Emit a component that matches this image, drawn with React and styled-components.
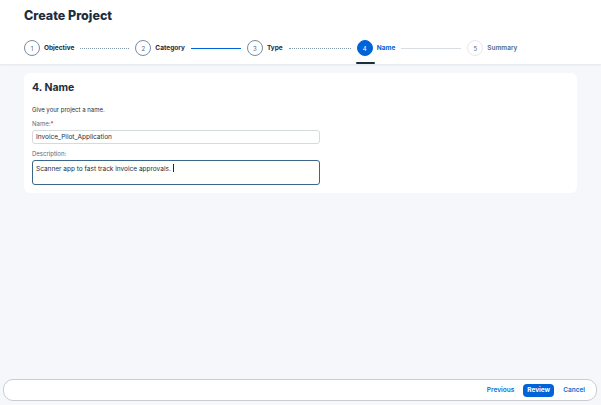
import React from "react";
import styled, { createGlobalStyle } from "styled-components";

const GlobalStyle = createGlobalStyle`
  html, body {
    margin: 0;
    padding: 0;
    background: #f5f7fa;
    font-family: "Inter", "Liberation Sans", sans-serif;
    color: #1d2d3e;
  }
`;

const Page = styled.div`
  width: 601px;
  height: 405px;
  display: flex;
  flex-direction: column;
  background: #f5f7fa;
  overflow: hidden;
`;

const Header = styled.div`
  background: #fff;
  height: 64px;
  box-sizing: border-box;
  padding: 8px 24px 0;
  box-shadow: 0 1px 2px rgba(0, 0, 0, 0.08);
  display: flex;
  flex-direction: column;
`;

const Title = styled.h1`
  margin: 0;
  font-size: 12.5px;
  font-weight: 800;
  color: #1d2d3e;
  line-height: 16px;
`;

const Steps = styled.div`
  display: flex;
  align-items: center;
  margin-top: 12px;
  height: 24px;
`;

const Step = styled.div`
  position: relative;
  display: flex;
  align-items: center;
  gap: 4px;
  height: 24px;
  &::after {
    content: "";
    display: ${(p) => (p.$active ? "block" : "none")};
    position: absolute;
    left: -1px;
    bottom: -4px;
    width: 19px;
    height: 2px;
    border-radius: 1px;
    background: #1d2d3e;
  }
`;

const Circle = styled.span`
  width: 16px;
  height: 16px;
  box-sizing: border-box;
  border-radius: 50%;
  display: flex;
  align-items: center;
  justify-content: center;
  font-size: 6px;
  border: 1px solid ${(p) => (p.$active ? "#0064d9" : p.$done ? "#758ca4" : "#e5e9ee")};
  background: ${(p) => (p.$active ? "#0064d9" : "#fff")};
  color: ${(p) => (p.$active ? "#fff" : "#556b82")};
`;

const StepLabel = styled.span`
  font-size: 6.5px;
  font-weight: ${(p) => (p.$muted ? 600 : 700)};
  color: ${(p) => (p.$active ? "#0064d9" : p.$muted ? "#556b82" : "#1d2d3e")};
`;

const Connector = styled.span`
  height: 0;
  width: ${(p) => p.$w}px;
  margin: 0 6px;
  border-top: 1px ${(p) => p.$kind || "solid"} ${(p) => p.$color || "#0064d9"};
`;

const Content = styled.main`
  flex: 1;
  padding: 9px 24px 0;
`;

const Card = styled.section`
  background: #fff;
  border-radius: 6px;
  padding: 9px 8px 10px;
  height: 120px;
  box-sizing: border-box;
`;

const CardTitle = styled.h2`
  margin: 0;
  font-size: 10.5px;
  font-weight: 700;
  color: #1d2d3e;
  line-height: 12px;
`;

const Hint = styled.p`
  margin: 12px 0 0;
  font-size: 6px;
  color: #1d2d3e;
  line-height: 8px;
`;

const FieldLabel = styled.label`
  display: block;
  margin-top: ${(p) => p.$mt || 6}px;
  font-size: 6px;
  color: #556b82;
  line-height: 8px;
  & b {
    color: #aa0808;
    font-weight: 400;
  }
`;

const Input = styled.div`
  margin-top: 2px;
  width: 288px;
  height: 14px;
  box-sizing: border-box;
  border: 1px solid #d5dadd;
  border-radius: 3px;
  padding: 0 3px;
  display: flex;
  align-items: center;
  font-size: 6.5px;
  color: #1d2d3e;
`;

const TextArea = styled.div`
  margin-top: 2px;
  width: 288px;
  height: 25px;
  box-sizing: border-box;
  border: 1.5px solid #3c6689;
  border-radius: 3px;
  background: #fffffb;
  padding: 3px 3px;
  font-size: 6.5px;
  color: #1d2d3e;
  line-height: 8px;
`;

const Caret = styled.span`
  display: inline-block;
  width: 1px;
  height: 8px;
  background: #1d2d3e;
  vertical-align: -1px;
  margin-left: 2px;
`;

const Footer = styled.footer`
  margin: 0 4px 4px 3px;
  height: 22px;
  box-sizing: border-box;
  border: 1px solid #c8cdd2;
  border-radius: 10px;
  background: #fff;
  display: flex;
  align-items: center;
  justify-content: flex-end;
  padding-right: 7px;
  gap: 5px;
`;

const Btn = styled.button`
  font-family: inherit;
  font-size: 6.5px;
  font-weight: ${(p) => (p.$primary ? 700 : 600)};
  height: 13px;
  padding: 0 4px;
  border-radius: 4px;
  border: none;
  background: ${(p) => (p.$primary ? "#0064d9" : "transparent")};
  color: ${(p) => (p.$primary ? "#fff" : "#0a6ed1")};
`;

const steps = [
  { n: 1, label: "Objective", done: true },
  { n: 2, label: "Category", done: true },
  { n: 3, label: "Type", done: true },
  { n: 4, label: "Name", active: true },
  { n: 5, label: "Summary", muted: true },
];

const connectors = [
  { w: 49, kind: "dotted", color: "#8396a8" },
  { w: 50, kind: "solid", color: "#0064d9" },
  { w: 62, kind: "dotted", color: "#8396a8" },
  { w: 60, kind: "solid", color: "#d9dee3" },
];

export default function App() {
  return (
    <Page>
      <GlobalStyle />
      <Header>
        <Title>Create Project</Title>
        <Steps>
          {steps.map((s, i) => (
            <React.Fragment key={s.n}>
              <Step $active={s.active}>
                <Circle $active={s.active} $done={s.done}>
                  {s.n}
                </Circle>
                <StepLabel $active={s.active} $muted={s.muted}>
                  {s.label}
                </StepLabel>
              </Step>
              {connectors[i] && (
                <Connector
                  $w={connectors[i].w}
                  $kind={connectors[i].kind}
                  $color={connectors[i].color}
                />
              )}
            </React.Fragment>
          ))}
        </Steps>
      </Header>
      <Content>
        <Card>
          <CardTitle>4. Name</CardTitle>
          <Hint>Give your project a name.</Hint>
          <FieldLabel $mt={6}>
            Name:<b>*</b>
          </FieldLabel>
          <Input>Invoice_Pilot_Application</Input>
          <FieldLabel $mt={6}>Description:</FieldLabel>
          <TextArea>
            Scanner app to fast track invoice approvals.
            <Caret />
          </TextArea>
        </Card>
      </Content>
      <Footer>
        <Btn>Previous</Btn>
        <Btn $primary>Review</Btn>
        <Btn>Cancel</Btn>
      </Footer>
    </Page>
  );
}
